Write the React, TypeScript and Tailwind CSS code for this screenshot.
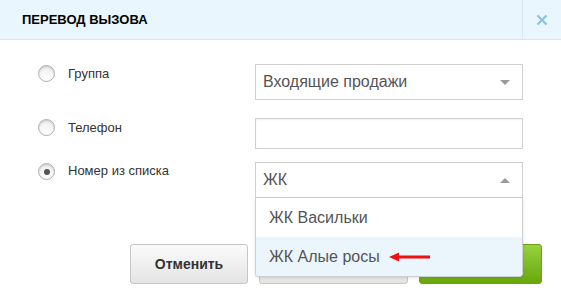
import React from "react";

const font = { fontFamily: '"Liberation Sans", Arial, sans-serif' };

function Radio({ checked }: { checked?: boolean }) {
  return (
    <span className="flex h-[17px] w-[17px] items-center justify-center rounded-full border-[1.5px] border-[#b0b0b0] bg-gradient-to-b from-[#eeeeee] to-white shadow-[inset_0_1px_2px_rgba(0,0,0,0.18)]">
      {checked && <span className="h-[6px] w-[6px] rounded-full bg-[#555]" />}
    </span>
  );
}

function Caret({ up }: { up?: boolean }) {
  return (
    <svg width="10" height="5" viewBox="0 0 10 5" className="mr-[12px]">
      <path d={up ? "M0 5 L5 0 L10 5 Z" : "M0 0 L10 0 L5 5 Z"} fill="#9a9a9a" />
    </svg>
  );
}

export default function App() {
  return (
    <div className="h-[306px] w-[561px] overflow-hidden bg-white" style={font}>
      <header className="flex h-[40px] items-center border-b border-[#d4e6f2] bg-[#e9f6fd]">
        <h1 className="flex-1 pl-[22px] pt-[1px] text-[13px] font-bold text-black">ПЕРЕВОД ВЫЗОВА</h1>
        <div className="flex h-full w-[39px] items-center justify-center border-l border-[#d4e6f2]">
          <svg width="12" height="12" viewBox="0 0 12 12">
            <path d="M1.5 1.5 L10.5 10.5 M10.5 1.5 L1.5 10.5" stroke="#8cc2e2" strokeWidth="2.2" />
          </svg>
        </div>
      </header>

      <div className="pt-[24px]">
        <div className="flex">
          <div className="flex w-[255px] items-start pl-[38px] pt-[1px]">
            <Radio />
            <span className="ml-[13px] mt-[-1px] text-[13px] text-[#333]">Группа</span>
          </div>
          <div className="flex h-[36px] w-[268px] items-center justify-between border border-[#cfcfcf] pl-[7px]">
            <span className="text-[16px] text-[#555]">Входящие продажи</span>
            <Caret />
          </div>
        </div>

        <div className="mt-[18px] flex">
          <div className="flex w-[255px] items-start pl-[38px] pt-[1px]">
            <Radio />
            <span className="ml-[13px] mt-[-1px] text-[13px] text-[#333]">Телефон</span>
          </div>
          <div className="h-[31px] w-[268px] border border-[#cfcfcf] shadow-[inset_0_1px_2px_rgba(0,0,0,0.06)]" />
        </div>

        <div className="mt-[13px] flex">
          <div className="flex w-[255px] items-start pl-[38px] pt-[1px]">
            <Radio checked />
            <span className="ml-[13px] mt-[-2px] text-[13px] text-[#333]">Номер из списка</span>
          </div>
          <div className="relative z-10 w-[268px]">
            <div className="flex h-[36px] items-center justify-between border border-[#cfcfcf] pl-[7px]">
              <span className="text-[16px] text-[#555]">ЖК</span>
              <Caret up />
            </div>
            <div className="absolute left-0 right-0 top-[36px] overflow-hidden rounded-b-[4px] border-x border-b border-[#cfcfcf] bg-white shadow-[0_1px_3px_rgba(0,0,0,0.12)]">
              <div className="flex h-[39px] items-center pl-[13px] text-[16px] text-[#555]">ЖК Васильки</div>
              <div className="flex h-[39px] items-center bg-[#eaf5fc] pl-[13px] text-[16px] text-[#555]">
                ЖК Алые росы
                <svg width="42" height="10" viewBox="0 0 42 10" className="ml-[9px]">
                  <path d="M8 5 L41 5" stroke="#ee1111" strokeWidth="3" />
                  <path d="M0 5 L10 0.5 L10 9.5 Z" fill="#ee1111" />
                </svg>
              </div>
            </div>
          </div>
        </div>

        <div className="mt-[46px] flex gap-[11px] pl-[130px]">
          <button className="h-[40px] w-[118px] rounded-[3px] border border-[#c6c6c6] bg-gradient-to-b from-[#fbfbfb] to-[#e4e4e4] text-[14px] font-bold text-[#333]">
            Отменить
          </button>
          <button className="h-[40px] w-[149px] rounded-[3px] border border-[#c6c6c6] bg-gradient-to-b from-[#fbfbfb] to-[#e4e4e4]" />
          <button className="h-[40px] w-[123px] rounded-[3px] border border-[#6da313] bg-gradient-to-b from-[#95d23c] to-[#69a80a]" />
        </div>
      </div>
    </div>
  );
}
